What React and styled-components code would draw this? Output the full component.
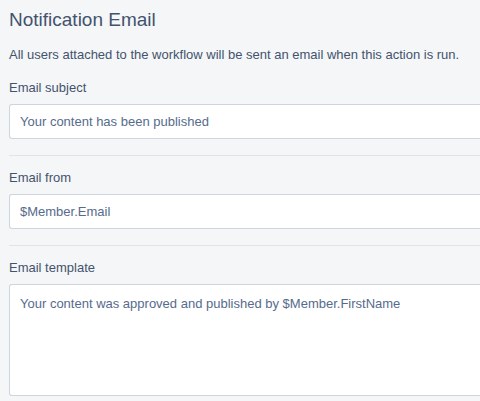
import React from "react";
import styled, { createGlobalStyle } from "styled-components";

const Global = createGlobalStyle`
  html, body { margin: 0; padding: 0; background: #f5f6f8; overflow: hidden; }
  body { font-family: "Liberation Sans", Arial, sans-serif; color: #43536d; }
  * { box-sizing: border-box; }
`;

const Panel = styled.div`
  padding: 9px 0 0 9px;
  display: flex;
  flex-direction: column;
`;

const Title = styled.h2`
  margin: 0;
  font-size: 19px;
  line-height: 22px;
  font-weight: 400;
  color: #43536d;
`;

const Description = styled.p`
  margin: 16px 0 0;
  font-size: 13px;
  line-height: 16px;
  color: #43536d;
`;

const Field = styled.div`
  display: flex;
  flex-direction: column;
  margin-top: ${(p) => (p.$first ? "17px" : "14px")};
`;

const Label = styled.label`
  font-size: 13px;
  line-height: 16px;
  color: #43536d;
  margin-bottom: 8px;
`;

const Input = styled.div`
  height: 35px;
  border: 1px solid #ced5e1;
  border-right: 0;
  border-radius: 3px 0 0 3px;
  background: #fff;
  padding: 0 10px;
  display: flex;
  align-items: center;
  font-size: 13px;
  color: #566b8c;
`;

const TextArea = styled.div`
  height: 112px;
  border: 1px solid #ced5e1;
  border-right: 0;
  border-radius: 3px 0 0 3px;
  background: #fff;
  padding: 11px 10px;
  font-size: 13px;
  line-height: 16px;
  color: #566b8c;
`;

const Separator = styled.hr`
  margin: 16px 0 0;
  border: 0;
  border-top: 1px solid #dfe3ea;
  height: 0;
`;

export default function App() {
  return (
    <>
      <Global />
      <Panel>
        <Title>Notification Email</Title>
        <Description>
          All users attached to the workflow will be sent an email when this action is run.
        </Description>
        <Field $first>
          <Label>Email subject</Label>
          <Input>Your content has been published</Input>
        </Field>
        <Separator />
        <Field>
          <Label>Email from</Label>
          <Input>$Member.Email</Input>
        </Field>
        <Separator />
        <Field>
          <Label>Email template</Label>
          <TextArea>Your content was approved and published by $Member.FirstName</TextArea>
        </Field>
      </Panel>
    </>
  );
}
